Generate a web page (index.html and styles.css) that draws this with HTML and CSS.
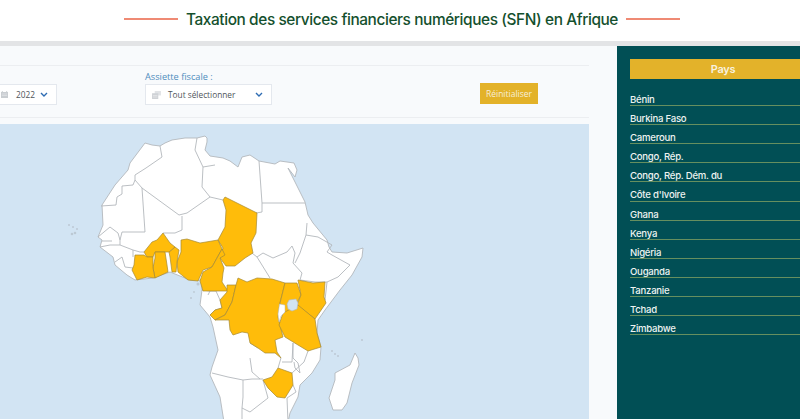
FILE: index.html
```html
<!DOCTYPE html>
<html lang="fr">
<head>
<meta charset="utf-8">
<title>Taxation des services financiers numériques (SFN) en Afrique</title>
<link rel="stylesheet" href="styles.css">
</head>
<body>
<header class="topbar">
  <span class="rule"></span>
  <h1 class="title">Taxation des services financiers numériques (SFN) en Afrique</h1>
  <span class="rule"></span>
</header>
<main class="layout">
  <section class="content">
    <div class="filters">
      <div class="field field-year">
        <label class="label">Année :</label>
        <div class="select select-year">
          <svg class="ico" viewBox="0 0 8 8"><path fill="#c9cdd1" d="M0 1h8v7H0zM1 0h1v1H1zM6 0h1v1H6z"/><path fill="#eef0f2" d="M1 3h6v.6H1zM1 5h6v.6H1z"/></svg>
          <span class="value">2022</span>
          <svg class="chev" viewBox="0 0 8 5"><path d="M1 1l3 3 3-3" fill="none" stroke="#2e6cb3" stroke-width="1.4"/></svg>
        </div>
      </div>
      <div class="field field-base">
        <label class="label">Assiette fiscale :</label>
        <div class="select select-base">
          <svg class="ico ico-stack" viewBox="0 0 10 9"><path fill="#e1e3e6" d="M3 0h7v5H3z"/><path fill="#cfd2d6" d="M0 2.500h7V9H0z"/><path fill="#f1f2f4" d="M1 4.500h5v.6H1zM1 6.500h5v.6H1z"/></svg>
          <span class="value value-base">Tout sélectionner</span>
          <svg class="chev" viewBox="0 0 8 5"><path d="M1 1l3 3 3-3" fill="none" stroke="#2e6cb3" stroke-width="1.4"/></svg>
        </div>
      </div>
      <button class="reset" type="button">Réinitialiser</button>
    </div>
    <div class="map">
      <svg class="map-svg" viewBox="0 124 589 295" aria-label="Carte de l'Afrique">
        <g class="land">
          <path d="M145 143L152 145 160 146 165 143 172 140 185 138 197 138 205 136 207 138 207 142 205 150 210 156 223 158 230 161 238 167 242 157 250 155 259 161 275 164 280 161 294 163 297 170 295 177 288 168 295 182 305 202 308 215 313 223 327 240 329 247 332 252 347 253 363 248 362 257 352 275 340 290 325 310 318 320 317 333 321 347 320 360 312 373 300 385 298 397 290 413 288 422 224 422 220 397 210 375 212 367 218 350 213 327 210 317 200 305 202 290 202 280 190 280 170 272 153 278 135 280 127 275 115 265 113 257 100 247 102 240 98 237 103 225 102 205 115 185 128 170 130 163Z"/>
          <path d="M355 353L358 358 359 365 352 383 347 403 342 410 333 410 329 398 335 380 335 373 350 365Z"/>
        </g>
        <g class="borders">
          <path d="M101 206L116 205 117 197 122 194 122 186 133 185 135 180M135 175L146 168 162 157 160 146"/>
          <path d="M135 175L135 180 142 188 179 215 187 213 210 197 223 200"/>
          <path d="M142 188L145 232 122 232 120 240 120 245 133 250 133 257"/>
          <path d="M182 216L182 230 175 233 163 233"/>
          <path d="M197 138L195 150 203 167 202 187 210 197M259 161L262 203 262 212 256 213M262 203L305 203"/>
          <path d="M98 237L110 227 118 233 120 240M102 241L112 241M100 247L110 245 120 245M115 262L122 257 125 267 133 268M133 250L140 252 144 252"/>
          <path d="M203 167L215 165"/>
          <path d="M257 257L263 253 273 258 287 252 292 246 295 253 293 263 302 273 300 280M257 257L270 278M252 253L257 257"/>
          <path d="M307 223L306 235 300 253 295 263M306 235L318 237 332 245 327 252 332 255 350 265 338 277 327 282 325 300M300 280L315 282 327 282"/>
          <path d="M202 290L210 291 208 295M210 291L216 291 220 300 222 308 215 310 210 315"/>
          <path d="M212 373L228 377 243 380 252 379 263 379M250 358L252 372 260 379M243 380L243 397 242 408 242 422M263 380L268 398 250 412 242 408"/>
          <path d="M282 362L292 362 293 343M293 343L293 358 298 363 300 373 295 368 294 362M308 351L304 362 292 373M293 385L296 392 287 398 288 422"/>
          <path d="M281 358L278 368M258 348L250 343"/>
        </g>
        <g class="hits">
          <path d="M225 197L257 213 256 233 251 243 253 253 245 258 235 266 226 266 220 258 223 248 218 240 225 227 226 210 223 200Z"/>
          <path d="M181 240L187 239 200 243 218 240 222 249 212 267 203 270 198 281 188 280 178 272 177 262 181 252Z"/>
          <path d="M175 247L179 250 177 262 176 272 172 272 170 257 169 252Z"/>
          <path d="M163 233L170 243 175 247 169 252 155 252 153 257 147 257 144 252 152 242 157 240Z"/>
          <path d="M155 252L165 252 167 265 168 272 155 278 153 268 155 258Z"/>
          <path d="M135 255L144 255 147 257 153 257 153 268 155 278 147 277 137 280 132 270 134 265Z"/>
          <path d="M222 249L225 255 220 258 224 268 223 273 222 282 228 291 213 291 203 291 200 281 203 272 212 267Z"/>
          <path d="M227 285L236 285 232 302 225 315 215 320 210 315 215 310 222 308 220 300 227 292Z"/>
          <path d="M238 278L247 282 257 278 272 279 285 283 280 303 278 317 283 337 275 340 277 352 281 358 275 353 265 353 258 348 250 343 248 333 242 332 233 335 230 330 229 320 215 320 225 315 232 302 236 285Z"/>
          <path d="M285 283L297 283 301 295 298 301 293 311 283 313 280 303Z"/>
          <path d="M298 280L313 283 325 282 324 297 326 303 315 319 297 305 301 295Z"/>
          <path d="M283 313L298 305 315 319 317 333 321 347 308 351 298 345 285 337 279 325Z"/>
          <path d="M278 368L292 373 293 385 285 398 277 397 268 388 263 380 272 377Z"/>
        </g>
        <path class="lake" d="M289 300L296 299 298 303 297 309 292 311 288 309 287 304Z"/>
        <path class="gap" d="M279.500 304L285 305 285 312 281 316 279 322 278 314Z"/>
        <g class="isles">
          <circle cx="69" cy="225" r="1"/><circle cx="73" cy="227" r="1"/><circle cx="77" cy="229" r="1"/><circle cx="72" cy="234" r="1.300"/><circle cx="75" cy="233" r="1.300"/>
          <circle cx="198" cy="284" r="1.500"/><circle cx="194" cy="292" r=".9"/><circle cx="191" cy="298" r="1"/>
          <circle cx="332" cy="351" r="1"/><circle cx="335" cy="354" r="1"/><circle cx="338" cy="356" r="1"/><circle cx="362" cy="340" r="1"/>
        </g>
      </svg>
    </div>
  </section>
  <aside class="sidebar">
    <h2 class="side-head">Pays</h2>
    <ul class="countries">
      <li>Bénin</li>
      <li>Burkina Faso</li>
      <li>Cameroun</li>
      <li>Congo, Rép.</li>
      <li>Congo, Rép. Dém. du</li>
      <li>Côte d'Ivoire</li>
      <li>Ghana</li>
      <li>Kenya</li>
      <li>Nigéria</li>
      <li>Ouganda</li>
      <li>Tanzanie</li>
      <li>Tchad</li>
      <li>Zimbabwe</li>
    </ul>
  </aside>
</main>
</body>
</html>
```
FILE: styles.css
```css
* { box-sizing: border-box; }
html, body { margin: 0; height: 419px; overflow: hidden; background: #fff; }
body { width: 800px; display: flex; flex-direction: column; font-family: Inter, sans-serif; }

.topbar {
  height: 46px; flex: none; display: flex; align-items: center; justify-content: center; gap: 8px;
  padding-bottom: 3px; padding-left: 4px; border-bottom: 5px solid #e3e4e6; background: #fff;
}
.rule { width: 54px; height: 1.500px; background: #ef8a74; }
.title { margin: 0; font-size: 15.400px; font-weight: 500; color: #14502d; white-space: nowrap; letter-spacing: -.4px; }

.layout { flex: 1; display: flex; min-height: 0; }
.content { width: 617px; flex: none; background: #f8fafc; padding-right: 28px; padding-top: 19px; }

.filters {
  height: 53px; border-top: 1px solid #eceef1; border-bottom: 1px solid #eceef1;
  display: flex; align-items: flex-start; padding-top: 4px;
}
.field { display: flex; flex-direction: column; gap: 1px; }
.field-year { margin-left: -34px; width: 91px; flex: none; }
.field-base { margin-left: 88px; width: 127px; flex: none; }
.label { font-family: "Open Sans", sans-serif; font-size: 9.200px; line-height: 13px; color: #4f8dbd; white-space: nowrap; }
.select {
  height: 21px; background: #fff; border: 1px solid #e4e8ee; display: flex; align-items: center;
  font-family: "Open Sans", sans-serif; font-size: 8.300px; color: #50555a; padding-left: 34px;
}
.ico { width: 7px; height: 7px; flex: none; margin-right: 8px; }
.ico-stack { width: 9px; height: 8px; margin-right: 7px; }
.select-base { padding-left: 6px; }
.value { width: 24px; }
.value-base { width: 87px; white-space: nowrap; }
.chev { width: 8px; height: 5px; flex: none; }
.reset {
  margin-left: 208px; margin-top: 13px; width: 58px; height: 21px; border: 0; padding: 0; background: #e3b229;
  color: #f6eeda; font-family: "Open Sans", sans-serif; font-size: 8.500px;
}

.map { margin-top: 6px; height: 295px; background: #d2e4f3; overflow: hidden; }
.map-svg { display: block; width: 589px; height: 295px; }
.land path { fill: #fff; stroke: #b3b8bc; stroke-width: .9; stroke-linejoin: round; }
.borders path { fill: none; stroke: #b3b8bc; stroke-width: .9; stroke-linejoin: round; }
.hits path { fill: #ffbc0a; stroke: #a58a35; stroke-width: .7; stroke-linejoin: round; }
.lake { fill: #d2e4f3; stroke: #b3b8bc; stroke-width: .6; }
.gap { fill: #fff; stroke: #b3b8bc; stroke-width: .5; }
.isles circle { fill: #bcc9d4; }

.sidebar { width: 199px; flex: none; background: #014f55; padding: 13px 0 0 13px; }
.side-head {
  margin: 0; width: 186px; height: 20px; background: #e3b22a; color: #f8f1df; text-align: center;
  font-size: 11px; line-height: 20px; font-weight: 600; letter-spacing: -.3px;
}
.countries { list-style: none; margin: 8px 0 0; padding: 0; }
.countries li {
  height: 19.100px; padding-top: 7px; line-height: 11px; font-size: 9.600px; font-weight: 500; color: #eef3f1;
  border-bottom: 1.500px solid #668f5f; white-space: nowrap; letter-spacing: -.25px;
}
```
